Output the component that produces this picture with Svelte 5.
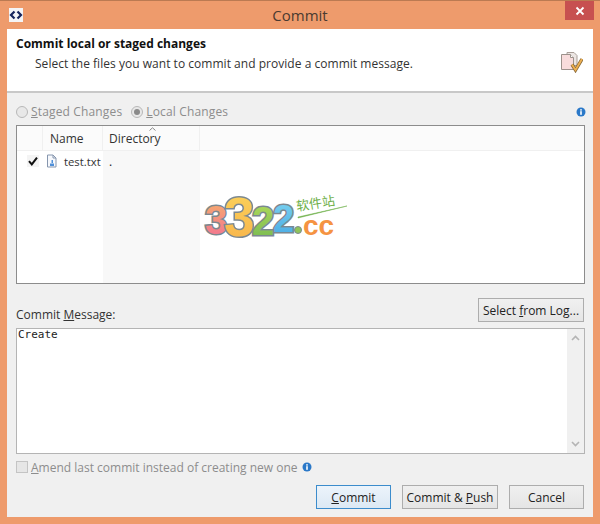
<script lang="ts">
  const files = [{ name: "test.txt", dir: "." }];
</script>

<div class="window">
  <div class="titlebar">
    <div class="app-icon">
      <svg width="14" height="14" viewBox="0 0 14 14">
        <path d="M5.500 3.500 2 7l3.500 3.500M8.500 3.500 12 7l-3.500 3.500" fill="none" stroke="#16245c" stroke-width="2.200" />
      </svg>
    </div>
    <span class="title">Commit</span>
    <div class="close">
      <svg width="10" height="10" viewBox="0 0 10 10">
        <path d="M1.500 1.500 8.500 8.500M8.500 1.500 1.500 8.500" stroke="#fff" stroke-width="1.800" />
      </svg>
    </div>
  </div>

  <div class="client">
    <header class="banner">
      <div class="banner-text">
        <h1>Commit local or staged changes</h1>
        <p>Select the files you want to commit and provide a commit message.</p>
      </div>
      <svg class="banner-icon" width="22" height="21" viewBox="0 0 22 21">
        <path d="M6 .5h7l3 3v10H6z" fill="#ece6e4" stroke="#a89e98" />
        <path d="M.5 2.500h9l3 3v12H.5z" fill="#f8dcdc" stroke="#9c928c" />
        <path d="M9.500 2.500v3h3" fill="#fff" stroke="#9c928c" />
        <path d="M11 12.500l3.500 5.500 6.500-11" fill="none" stroke="#8a6a3a" stroke-width="3.400" />
        <path d="M11 12.500l3.500 5.500 6.500-11" fill="none" stroke="#eeb050" stroke-width="1.800" />
      </svg>
    </header>

    <main class="body">
      <div class="tabs">
        <label class="radio"><i class="dot"></i><span><u>S</u>taged Changes</span></label>
        <label class="radio"><i class="dot on"></i><span><u>L</u>ocal Changes</span></label>
        <svg class="info push" width="10" height="10" viewBox="0 0 10 10">
          <circle cx="5" cy="5" r="4.500" fill="#2a78c8" />
          <rect x="4.200" y="4.200" width="1.600" height="3.600" fill="#fff" />
          <rect x="4.200" y="2.200" width="1.600" height="1.400" fill="#fff" />
        </svg>
      </div>

      <div class="table">
        <div class="tcol-dir"></div>
        <div class="thead">
          <div class="th th-check"></div>
          <div class="th th-name">Name</div>
          <div class="th th-dir">
            <svg class="sort" width="7" height="4" viewBox="0 0 7 4">
              <path d="M.5 3.500 3.500.8 6.500 3.500" fill="none" stroke="#888" />
            </svg>
            Directory
          </div>
        </div>
        {#each files as file}
          <div class="row">
            <div class="td-check">
              <svg width="12" height="12" viewBox="0 0 12 12">
                <rect x="0" y="0" width="12" height="12" fill="#f4f4f4" />
                <path d="M2 6.200 4.800 9.400 10 2.600" fill="none" stroke="#111" stroke-width="2" />
              </svg>
            </div>
            <div class="td-name">
              <svg width="13" height="14" viewBox="0 0 13 14">
                <path d="M2.500 1h5.500l3 3v9h-8.500z" fill="#f6f8fc" stroke="#8696ae" />
                <path d="M8 1v3h3" fill="none" stroke="#8696ae" />
                <path d="M5 9.500h4v2.500H5z" fill="#4f8fd8" />
                <path d="M6.500 6h1.500v3h-1.500z" fill="#4f8fd8" />
              </svg>
              <span>{file.name}</span>
            </div>
            <div class="td-dir">{file.dir}</div>
          </div>
        {/each}

        <svg class="mark" width="150" height="75" viewBox="0 -20 150 75">
          <defs>
            <linearGradient id="g1" x1="0" y1="0" x2="0" y2="1">
              <stop offset="0" stop-color="#f6b06a" />
              <stop offset="1" stop-color="#f26f96" />
            </linearGradient>
            <linearGradient id="g2" x1="0" y1="0" x2="0" y2="1">
              <stop offset="0" stop-color="#fbd45c" />
              <stop offset="1" stop-color="#f8b24a" />
            </linearGradient>
            <linearGradient id="g3" x1="0" y1="0" x2="0" y2="1">
              <stop offset="0" stop-color="#b4dc5c" />
              <stop offset="1" stop-color="#74b850" />
            </linearGradient>
            <linearGradient id="g4" x1="0" y1="0" x2="0" y2="1">
              <stop offset="0" stop-color="#7cd4f0" />
              <stop offset="1" stop-color="#46a8e4" />
            </linearGradient>
          </defs>
          <text class="digit" x="71" y="41" font-size="38" fill="url(#g4)">2</text>
          <text class="digit" x="50" y="44" font-size="40" fill="url(#g3)">2</text>
          <text class="digit" x="3" y="43" font-size="40" fill="url(#g1)">3</text>
          <text class="digit" x="22" y="45" font-size="55" fill="url(#g2)">3</text>
          <circle cx="96" cy="39" r="3.500" fill="#8fc45a" stroke="#7c8890" />
          <text class="cc" x="101" y="44">cc</text>
          <text class="cn" x="95" y="20" transform="rotate(-9 95 20)">软件站</text>
          <path d="M96 27 145 15 96 26z" fill="#6fb04a" stroke="#6fb04a" stroke-width="0.500" />
        </svg>
      </div>

      <div class="msg-head">
        <span class="msg-label">Commit <u>M</u>essage:</span>
        <button class="btn log">Select <u>f</u>rom Log...</button>
      </div>

      <div class="editor">
        <div class="editor-text">Create</div>
        <div class="scroll">
          <svg width="9" height="6" viewBox="0 0 9 6"><path d="M1 5 4.500 1.500 8 5" fill="none" stroke="#b4b4b4" stroke-width="1.600" /></svg>
          <svg width="9" height="6" viewBox="0 0 9 6"><path d="M1 1 4.500 4.500 8 1" fill="none" stroke="#b4b4b4" stroke-width="1.600" /></svg>
        </div>
      </div>

      <div class="amend">
        <i class="box"></i>
        <span><u>A</u>mend last commit instead of creating new one</span>
        <svg class="info" width="10" height="10" viewBox="0 0 10 10">
          <circle cx="5" cy="5" r="4.500" fill="#2a78c8" />
          <rect x="4.200" y="4.200" width="1.600" height="3.600" fill="#fff" />
          <rect x="4.200" y="2.200" width="1.600" height="1.400" fill="#fff" />
        </svg>
      </div>

      <div class="actions">
        <button class="btn primary"><u>C</u>ommit</button>
        <button class="btn push-btn">Commit &amp; <u>P</u>ush</button>
        <button class="btn cancel">Cancel</button>
      </div>
    </main>
  </div>
</div>

<style>
  :global(body) {
    margin: 0;
    background: #ee9b6c;
  }

  .window {
    width: 600px;
    height: 524px;
    box-sizing: border-box;
    padding: 0 7px 7px;
    display: flex;
    flex-direction: column;
    background: #ee9b6c;
    font-family: "Open Sans", "Noto Sans", sans-serif;
    font-size: 12px;
    color: #222;
    overflow: hidden;
  }

  .titlebar {
    height: 29px;
    flex: none;
    box-sizing: border-box;
    border-top: 1px solid #bb7a52;
    margin: 0 -7px;
    padding: 0 7px;
    display: flex;
    align-items: flex-start;
    position: relative;
    justify-content: center;
  }

  .app-icon {
    position: absolute;
    left: 9px;
    top: 7px;
    width: 14px;
    height: 14px;
    background: #f4f4f6;
  }

  .title {
    font-size: 15px;
    line-height: 28px;
    color: #4a3a30;
  }

  .close {
    position: absolute;
    right: 6px;
    top: 0;
    width: 29px;
    height: 19px;
    background: #c75050;
    display: flex;
    align-items: center;
    justify-content: center;
  }

  .client {
    flex: 1;
    display: flex;
    flex-direction: column;
    background: #f0f0f0;
    min-height: 0;
  }

  .banner {
    height: 64px;
    flex: none;
    box-sizing: border-box;
    background: #fff;
    border-bottom: 2px solid #c8c8c8;
    display: flex;
    justify-content: space-between;
    padding: 0 9px;
  }

  .banner h1 {
    margin: 7px 0 0;
    font-size: 12px;
    line-height: 16px;
    font-weight: 700;
    color: #111;
  }

  .banner p {
    margin: 4px 0 0 19px;
    font-size: 12px;
    line-height: 16px;
    color: #333;
    letter-spacing: 0.03px;
  }

  .banner-icon {
    margin: 23px 1px 0 0;
  }

  .body {
    flex: 1;
    display: flex;
    flex-direction: column;
    padding: 0 8px 0 9px;
    min-height: 0;
  }

  .tabs {
    height: 32px;
    flex: none;
    box-sizing: border-box;
    padding-top: 5px;
    display: flex;
    align-items: center;
    gap: 9px;
    color: #8d8d8d;
    letter-spacing: 0.15px;
  }

  .radio {
    display: flex;
    align-items: center;
    gap: 3px;
  }

  .dot {
    width: 12px;
    height: 12px;
    box-sizing: border-box;
    border-radius: 50%;
    border: 1px solid #b8b8b8;
    background: #e8e8e8;
    position: relative;
  }

  .dot.on::after {
    content: "";
    position: absolute;
    inset: 2px;
    border-radius: 50%;
    background: #8a8a8a;
  }

  .push {
    margin-left: auto;
    margin-right: -1px;
  }

  .table {
    height: 159px;
    flex: none;
    box-sizing: border-box;
    border: 1px solid #8c8c8c;
    background: #fff;
    position: relative;
  }

  .tcol-dir {
    position: absolute;
    left: 86px;
    top: 0;
    bottom: 0;
    width: 97px;
    background: #f8f8f8;
  }

  .thead {
    height: 24px;
    display: flex;
    position: relative;
    background: #fbfbfb;
    border-bottom: 1px solid #f0f0f0;
  }

  .th {
    line-height: 25px;
    border-right: 1px solid #f0f0f0;
    box-sizing: border-box;
    color: #333;
    position: relative;
  }

  .th-check { width: 26px; }
  .th-name { width: 60px; padding-left: 7px; }
  .th-dir { width: 97px; padding-left: 6px; }

  .sort {
    position: absolute;
    left: 46px;
    top: 1px;
  }

  .row {
    display: flex;
    align-items: center;
    height: 16px;
    margin-top: 2px;
    position: relative;
  }

  .td-check {
    width: 26px;
    padding-left: 10px;
    box-sizing: border-box;
    display: flex;
  }

  .td-name {
    width: 60px;
    display: flex;
    align-items: center;
    gap: 6px;
    padding-left: 2px;
    box-sizing: border-box;
    color: #333;
    font-size: 11.300px;
  }

  .td-dir { padding-left: 6px; }

  .mark {
    position: absolute;
    left: 185px;
    top: 45px;
  }

  .digit {
    font-family: "Liberation Sans", sans-serif;
    font-weight: 700;
    stroke: #7c8890;
    stroke-width: 3px;
    paint-order: stroke fill;
  }

  .cc {
    font-family: "Liberation Sans", sans-serif;
    font-size: 28px;
    font-weight: 700;
    fill: #f59342;
  }

  .cn {
    font-family: "Noto Sans CJK SC", sans-serif;
    font-size: 13px;
    fill: #6fb04a;
  }

  .msg-head {
    height: 44px;
    flex: none;
    display: flex;
    align-items: flex-start;
    justify-content: space-between;
  }

  .msg-label {
    line-height: 20px;
    color: #333;
    margin-top: 21px;
  }

  .btn {
    font-family: inherit;
    font-size: 12px;
    color: #222;
    height: 24px;
    padding: 0;
    box-sizing: border-box;
    border: 1px solid #adadad;
    background: linear-gradient(#f0f0f0, #e5e5e5);
    border-radius: 0;
  }

  .log {
    width: 106px;
    margin: 14px 1px 0 0;
  }

  .editor {
    height: 126px;
    flex: none;
    box-sizing: border-box;
    border: 1px solid #b4b4b4;
    background: #fff;
    display: flex;
    margin-right: 0;
  }

  .editor-text {
    flex: 1;
    font-family: "DejaVu Sans Mono", monospace;
    font-size: 11px;
    line-height: 12px;
    padding: 0 1px;
    color: #222;
  }

  .scroll {
    width: 17px;
    background: #f0f0f0;
    display: flex;
    flex-direction: column;
    justify-content: space-between;
    align-items: center;
    padding: 6px 0;
    box-sizing: border-box;
  }

  .amend {
    height: 26px;
    flex: none;
    display: flex;
    align-items: center;
    color: #8d8d8d;
    gap: 3px;
  }

  .box {
    width: 12px;
    height: 12px;
    box-sizing: border-box;
    border: 1px solid #c4c4c4;
    background: #e6e6e6;
  }

  .amend .info {
    margin-left: 1px;
  }

  .actions {
    display: flex;
    justify-content: flex-end;
    gap: 11px;
    padding: 5px 1px 0 0;
  }

  .primary {
    width: 75px;
    border-color: #3c8ccc;
    background: linear-gradient(#ecf4fb, #dce9f4);
  }

  .push-btn { width: 96px; }
  .cancel { width: 75px; }
</style>
